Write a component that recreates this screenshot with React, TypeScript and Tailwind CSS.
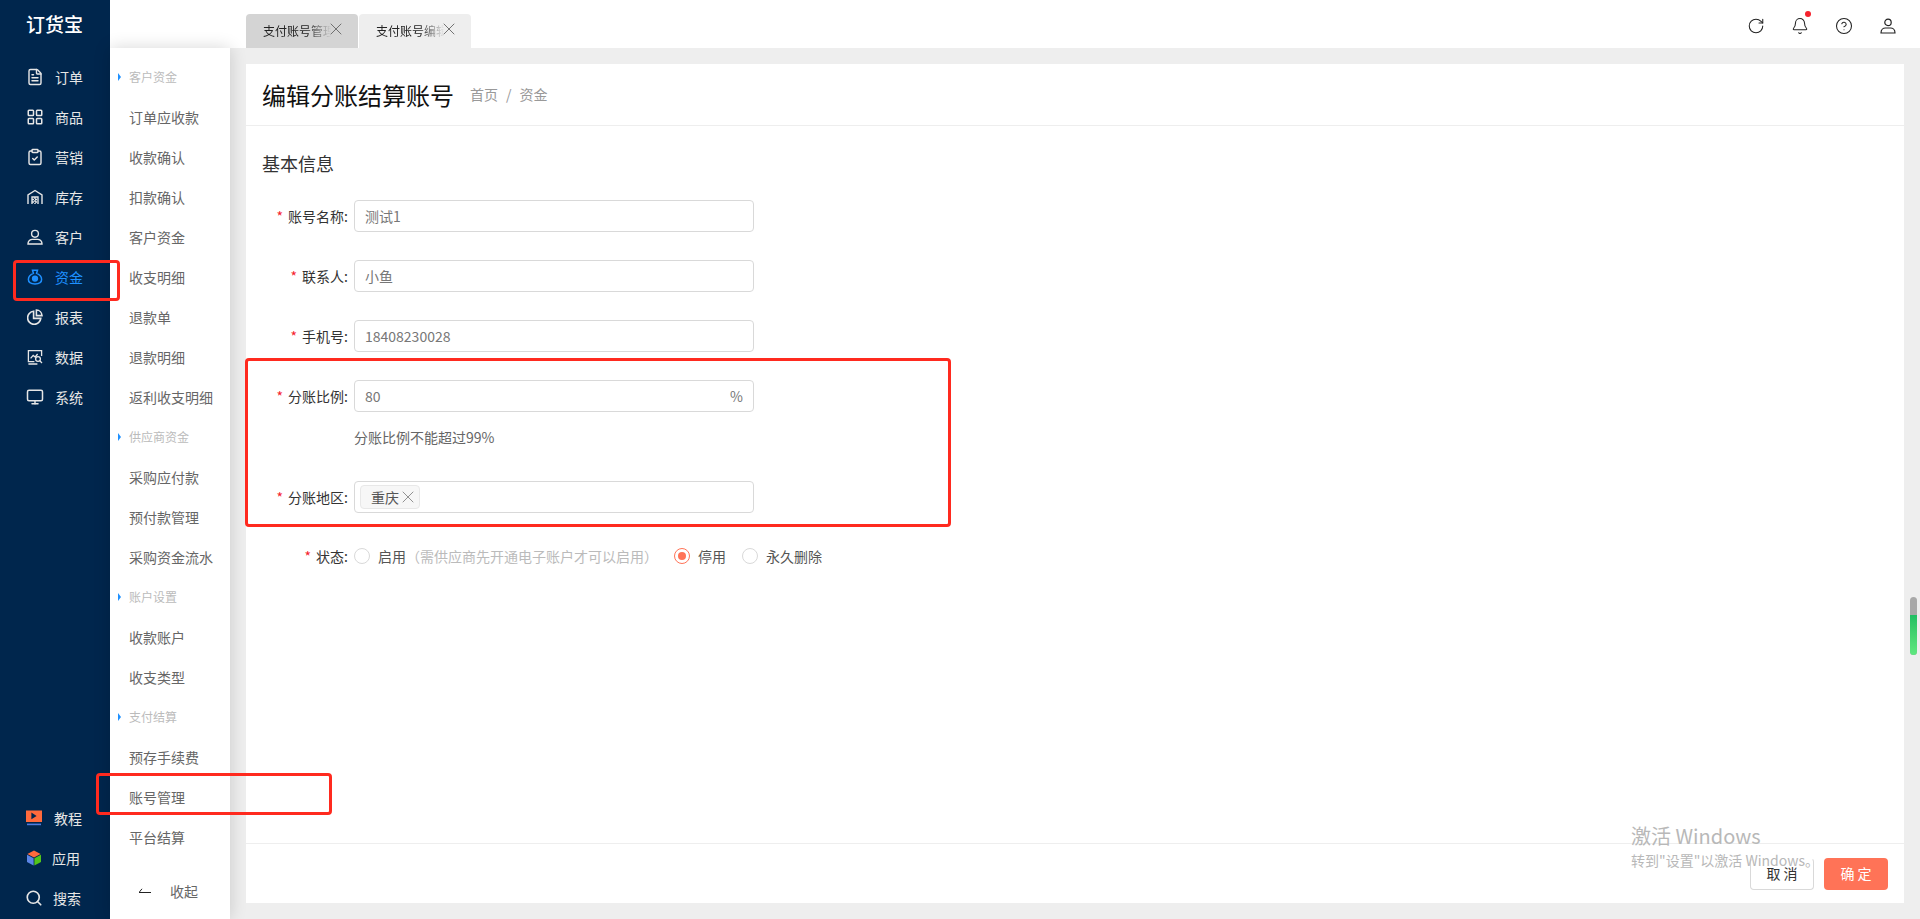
import { Bell, CircleHelp, ClipboardCheck, FileText, LayoutGrid, Monitor, RotateCw, Search, X } from "lucide-react";
import type { ReactNode } from "react";

const iconCls = "w-4 h-4";
const lucideCls = "-mx-px h-[18px] w-[18px]";

function WarehouseIcon() {
  return (
    <svg viewBox="0 0 16 16" className={iconCls} fill="none" stroke="currentColor" strokeWidth="1.4">
      <path d="M1 15V6l7-4.5L15 6v9" />
      <path d="M5 15V8h6v7" />
      <path d="M5 10.5h6M5 13h6M8 8v7" strokeDasharray="2 1" />
    </svg>
  );
}

function PersonIcon() {
  return (
    <svg viewBox="0 0 16 16" className={iconCls} fill="none" stroke="currentColor" strokeWidth="1.4">
      <circle cx="8" cy="4.8" r="3.4" />
      <path d="M1 15c0-3.2 2.6-4.4 4-4.6h6c1.4.2 4 1.4 4 4.6z" />
    </svg>
  );
}

function BagIcon() {
  return (
    <svg viewBox="0 0 16 16" className={iconCls} fill="none" stroke="#1e90ff" strokeWidth="1.5">
      <path d="M5.5 1.2h5L9.6 4.4c2.8 1 5 3.4 5 6.2 0 2.8-2.6 4.4-6.6 4.4s-6.6-1.6-6.6-4.4c0-2.8 2.2-5.2 5-6.2z" />
      <circle cx="8" cy="9.6" r="2.4" fill="#1e90ff" />
    </svg>
  );
}

function ChartIcon() {
  return (
    <svg viewBox="0 0 16 16" className={iconCls} fill="none" stroke="currentColor" strokeWidth="1.6">
      <path d="M6.6 2.2a6.6 6.6 0 1 0 7.2 7.2H6.6z" />
      <path d="M9.4 1v5.6H15A5.8 5.8 0 0 0 9.4 1z" />
    </svg>
  );
}

function DataIcon() {
  return (
    <svg viewBox="0 0 16 16" className={iconCls} fill="none" stroke="currentColor" strokeWidth="1.3">
      <path d="M14.6 7V1.6H1.4v11h6" />
      <path d="M3.6 9.4l2.6-3 2 1.6L10.6 5" />
      <circle cx="11" cy="10" r="2.4" />
      <path d="M12.8 11.8l2.2 2.2M1.4 15h9" />
    </svg>
  );
}

function PlayIcon() {
  return (
    <svg viewBox="0 0 16 16" className={iconCls}>
      <rect x="0" y="0.5" width="16" height="11.5" fill="#ff6a3c" />
      <path d="M5.4 2.6l5.2 3.3-5.2 3.3z" fill="#00264d" />
      <rect x="1" y="13.6" width="14" height="1.6" fill="#4f7de0" />
    </svg>
  );
}

function CubeIcon() {
  return (
    <svg viewBox="0 0 16 16" className={iconCls}>
      <path d="M8 .6l6.6 3.4L8 7.4 1.4 4z" fill="#ff6a3c" />
      <path d="M1 4.8l6.6 3.4v7.2L1 12z" fill="#5b85e6" />
      <path d="M15 4.8L8.4 8.2v7.2L15 12z" fill="#52c41a" />
    </svg>
  );
}

const mainNav: { label: string; icon: ReactNode; active?: boolean }[] = [
  { label: "订单", icon: <FileText className={lucideCls} strokeWidth={1.9} /> },
  { label: "商品", icon: <LayoutGrid className={lucideCls} strokeWidth={2} /> },
  { label: "营销", icon: <ClipboardCheck className={lucideCls} strokeWidth={1.9} /> },
  { label: "库存", icon: <WarehouseIcon /> },
  { label: "客户", icon: <PersonIcon /> },
  { label: "资金", icon: <BagIcon />, active: true },
  { label: "报表", icon: <ChartIcon /> },
  { label: "数据", icon: <DataIcon /> },
  { label: "系统", icon: <Monitor className={lucideCls} strokeWidth={2} /> },
];

const subNav: { title: string; items: string[] }[] = [
  { title: "客户资金", items: ["订单应收款", "收款确认", "扣款确认", "客户资金", "收支明细", "退款单", "退款明细", "返利收支明细"] },
  { title: "供应商资金", items: ["采购应付款", "预付款管理", "采购资金流水"] },
  { title: "账户设置", items: ["收款账户", "收支类型"] },
  { title: "支付结算", items: ["预存手续费", "账号管理", "平台结算"] },
];

function Label({ text }: { text: string }) {
  return (
    <label className="w-[108px] shrink-0 pr-[6px] text-right text-[14px] text-[#333]">
      <span className="mr-[5px] text-[#f5222d]">*</span>
      {text}:
    </label>
  );
}

function Field({ label, value, suffix }: { label: string; value: string; suffix?: string }) {
  return (
    <div className="flex h-8 items-center">
      <Label text={label} />
      <div className="flex h-8 w-[400px] items-center justify-between rounded border border-[#d9d9d9] px-[10px] text-[14px] text-[#777]">
        <span>{value}</span>
        {suffix && <span>{suffix}</span>}
      </div>
    </div>
  );
}

function Radio({ checked }: { checked?: boolean }) {
  return (
    <span className={`flex h-4 w-4 items-center justify-center rounded-full border ${checked ? "border-[#ff7357]" : "border-[#d9d9d9]"}`}>
      {checked && <span className="h-2 w-2 rounded-full bg-[#ff7357]" />}
    </span>
  );
}

function Tab({ label, active }: { label: string; active?: boolean }) {
  return (
    <div className={`relative flex h-[34px] w-[112px] items-center rounded-t pl-[17px] ${active ? "bg-[#eeeeee]" : "bg-[#d4d4d4]"}`}>
      <span className="whitespace-nowrap text-[12px] text-[#222] [mask-image:linear-gradient(to_right,black_60%,transparent_95%)]">
        {label}
      </span>
      <X className="absolute right-[12px] top-[5px] h-5 w-5 text-[#666]" strokeWidth={1.1} />
    </div>
  );
}

export default function App() {
  return (
    <div className="relative flex h-[919px] w-[1920px] overflow-hidden bg-white font-['Noto_Sans_CJK_SC',sans-serif]">
      <aside className="flex w-[110px] shrink-0 flex-col justify-between bg-[#00264d] text-[14px] text-[#e6e6e6]">
        <div>
          <div className="flex h-[57px] items-start pl-[26px] pt-[9px] text-[19px] font-medium leading-[30px] text-white">订货宝</div>
          {mainNav.map((item) => (
            <div key={item.label} className={`flex h-10 items-center gap-[12px] pl-[27px] ${item.active ? "text-[#1e90ff]" : ""}`}>
              {item.icon}
              <span>{item.label}</span>
            </div>
          ))}
        </div>
        <div className="pb-px">
          <div className="flex h-10 items-center gap-[12px] pl-[26px]">
            <PlayIcon />
            <span>教程</span>
          </div>
          <div className="flex h-10 items-center gap-[10px] pl-[26px]">
            <CubeIcon />
            <span>应用</span>
          </div>
          <div className="flex h-10 items-center gap-[11px] pl-[26px]">
            <Search className={lucideCls} strokeWidth={2.2} />
            <span>搜索</span>
          </div>
        </div>
      </aside>

      <div className="flex min-w-0 flex-1 flex-col">
        <header className="flex h-12 shrink-0 items-end justify-between pl-[136px]">
          <div className="flex gap-px">
            <Tab label="支付账号管理" />
            <Tab label="支付账号编辑" active />
          </div>
          <div className="mb-[13px] flex items-center gap-[26px] pr-[23px] text-[#222]">
            <RotateCw className="h-[18px] w-[18px]" strokeWidth={1.4} />
            <div className="relative">
              <Bell className="h-[18px] w-[18px]" strokeWidth={1.4} />
              <span className="absolute -right-[2px] -top-[6px] h-[6px] w-[6px] rounded-full bg-[#f5222d]" />
            </div>
            <CircleHelp className="h-[18px] w-[18px]" strokeWidth={1.4} />
            <svg viewBox="0 0 18 18" className="h-[18px] w-[18px]" fill="none" stroke="currentColor" strokeWidth="1.2">
              <circle cx="9" cy="5.4" r="3.2" />
              <path d="M2 16c0-3.4 2.4-5 4.4-5h5.2c2 0 4.4 1.6 4.4 5z" />
            </svg>
          </div>
        </header>

        <div className="flex min-h-0 flex-1">
          <nav className="z-10 flex w-[120px] shrink-0 flex-col justify-between bg-white pt-[9px] shadow-[0_0_16px_rgba(0,0,0,0.16)]">
            <div>
              {subNav.map((group) => (
                <div key={group.title}>
                  <div className="flex h-10 items-center pl-[8px] text-[12px] text-[#bbb]">
                    <span className="mr-[8px] h-0 w-0 border-y-[4px] border-l-[3px] border-y-transparent border-l-[#1e90ff]" />
                    {group.title}
                  </div>
                  {group.items.map((item) => (
                    <div key={item} className="flex h-10 items-center pl-[19px] text-[14px] text-[#666]">
                      {item}
                    </div>
                  ))}
                </div>
              ))}
            </div>
            <div className="mb-[8px] flex h-10 items-center gap-[19px] pl-[29px] text-[14px] text-[#666]">
              <svg viewBox="0 0 12 6" className="h-[6px] w-3" fill="none" stroke="#222" strokeWidth="1">
                <path d="M0 4.5h12M0 4.5L3 .8" />
              </svg>
              <span>收起</span>
            </div>
          </nav>

          <main className="min-w-0 flex-1 bg-[#eeeeee] pb-[16px] pl-[16px] pr-[16px] pt-[16px]">
            <div className="flex h-full flex-col bg-white">
              <div className="flex h-[62px] shrink-0 items-center gap-[16px] border-b border-[#eeeeee] pl-[16px]">
                <h1 className="text-[24px] font-normal text-[#111]">编辑分账结算账号</h1>
                <div className="flex items-center gap-[8px] text-[14px] text-[#999]">
                  <span>首页</span>
                  <span>/</span>
                  <span>资金</span>
                </div>
              </div>

              <div className="min-h-0 flex-1 pt-[24px]">
                <h2 className="h-[27px] pl-[16px] text-[18px] font-normal leading-[27px] text-[#333]">基本信息</h2>
                <div className="mt-[23px] flex flex-col">
                  <Field label="账号名称" value="测试1" />
                  <div className="mt-[28px]"><Field label="联系人" value="小鱼" /></div>
                  <div className="mt-[28px]"><Field label="手机号" value="18408230028" /></div>
                  <div className="mt-[28px]"><Field label="分账比例" value="80" suffix="%" /></div>
                  <div className="mt-[14px] h-[22px] pl-[108px] text-[14px] leading-[22px] text-[#666]">分账比例不能超过99%</div>
                  <div className="mt-[33px] flex h-8 items-center">
                    <Label text="分账地区" />
                    <div className="flex h-8 w-[400px] items-center rounded border border-[#d9d9d9] pl-[5px]">
                      <div className="flex h-6 items-center rounded-sm border border-[#e8e8e8] bg-[#f7f7f7] pl-[10px] pr-px text-[14px] text-[#555]">
                        重庆
                        <X className="-ml-px h-5 w-5 text-[#888]" strokeWidth={1.1} />
                      </div>
                    </div>
                  </div>
                  <div className="mt-[27px] flex h-[32px] items-center text-[14px] text-[#555]">
                    <Label text="状态" />
                    <Radio />
                    <span className="ml-2">启用</span>
                    <span className="text-[#bbb]">（需供应商先开通电子账户才可以启用）</span>
                    <span className="ml-[16px]"><Radio checked /></span>
                    <span className="ml-[8px]">停用</span>
                    <span className="ml-[16px]"><Radio /></span>
                    <span className="ml-[8px]">永久删除</span>
                  </div>
                </div>
              </div>

              <div className="flex h-[60px] shrink-0 items-center justify-end gap-[10px] border-t border-[#eeeeee] pr-[16px]">
                <button className="h-8 w-16 rounded border border-[#d9d9d9] border-t-transparent bg-white pl-[3px] text-[14px] tracking-[3px] text-[#333]">取消</button>
                <button className="h-8 w-16 rounded bg-[#ff7357] pl-[3px] text-[14px] tracking-[3px] text-white">确定</button>
              </div>
            </div>
          </main>
        </div>
      </div>

      {/* 截图上的红框标注 */}
      <div className="absolute left-[13px] top-[260px] z-20 h-[41px] w-[107px] rounded-sm border-[3px] border-[#ff2a1f]" />
      <div className="absolute left-[96px] top-[773px] z-20 h-[42px] w-[236px] rounded-sm border-[3px] border-[#ff2a1f]" />
      <div className="absolute left-[245px] top-[358px] z-20 h-[169px] w-[706px] rounded-sm border-[3px] border-[#ff2a1f]" />

      {/* 右侧滚动条小挂件 */}
      <div className="absolute left-[1910px] top-[597px] z-20 h-[58px] w-[7px] overflow-hidden rounded-full bg-[#a8a8a8]">
        <div className="mt-[18px] h-[40px] bg-gradient-to-b from-[#1fbf63] to-[#5fe87f]" />
      </div>

      {/* Windows 激活水印 */}
      <div className="pointer-events-none absolute left-[1631px] top-[822px] z-20 text-[#b8b8b8]">
        <div className="text-[20px] leading-[28px]">激活 Windows</div>
        <div className="text-[14px] leading-[20px]">转到"设置"以激活 Windows。</div>
      </div>
    </div>
  );
}
